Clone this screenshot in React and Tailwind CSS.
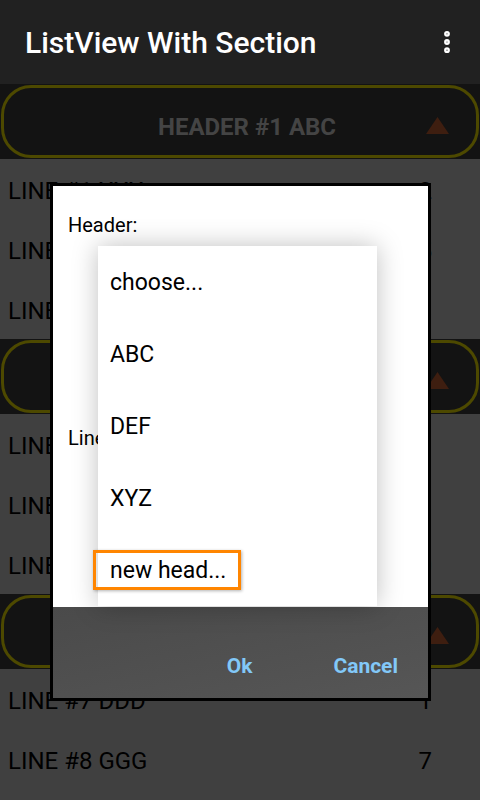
import { EllipsisVertical } from 'lucide-react'

const sections = [
  { title: 'HEADER #1 ABC', lines: [['LINE #1 XXX', 2], ['LINE #2 YYY', 5], ['LINE #3 ZZZ', 3]] },
  { title: 'HEADER #2 DEF', lines: [['LINE #4 AAA', 1], ['LINE #5 BBB', 3], ['LINE #6 CCC', 0]] },
  { title: 'HEADER #3 XYZ', lines: [['LINE #7 DDD', 1], ['LINE #8 GGG', 7]] },
]

const options = ['choose...', 'ABC', 'DEF', 'XYZ', 'new head...']

function SectionHeader({ title }) {
  return (
    <div className="h-[75px] bg-[#131313] p-[1px] flex">
      <div className="flex-1 flex items-center rounded-[30px] border-[3px] border-[#4d4900]">
        <span className="flex-1 text-center pl-[64px] pt-[10px] text-[24px] font-bold text-[#444444]">{title}</span>
        <svg width="23" height="17" viewBox="0 0 23 17" className="mr-[27px] mt-[8px]">
          <polygon points="11.5,0 23,17 0,17" fill="#3e1e10" />
        </svg>
      </div>
    </div>
  )
}

function LineRow({ name, count }) {
  return (
    <div className="h-[60px] flex items-center justify-between pl-[8px] pr-[48px] pt-[4px] text-[24px] text-black">
      <span>{name}</span>
      <span>{count}</span>
    </div>
  )
}

export default function App() {
  return (
    <div className="relative w-[480px] h-[800px] overflow-hidden bg-[#404040] font-['Roboto',sans-serif]">
      <div className="h-[84px] bg-[#212121] flex items-center justify-between pl-[25px] pr-[19px]">
        <h1 className="text-[30px] font-medium text-white">ListView With Section</h1>
        <EllipsisVertical size={28} strokeWidth={3} className="text-white" />
      </div>

      {sections.map((s) => (
        <div key={s.title}>
          <SectionHeader title={s.title} />
          {s.lines.map(([n, c]) => (
            <LineRow key={n} name={n} count={c} />
          ))}
        </div>
      ))}

      {/* dialog */}
      <div className="absolute left-[50px] top-[183px] w-[381px] h-[518px] border-[3px] border-black flex flex-col">
        <div className="relative flex-1 bg-white pl-[15px]">
          <div className="pt-[24px] text-[20px] text-black">Header:</div>
          <div className="pt-[183px] text-[20px] text-black">Line:</div>

          {/* spinner popup */}
          <div className="absolute left-[45px] top-[60px] w-[279px] h-[360px] bg-white shadow-[0_0_24px_rgba(0,0,0,0.25)]">
            {options.map((o, i) => (
              <div key={o} className="relative h-[72px] flex items-center pl-[12px] pt-[3px] text-[23px] text-black">
                {i === options.length - 1 && (
                  <div className="absolute left-[-5px] top-[16px] w-[148px] h-[40px] border-[3px] border-[#ff8500] shadow-[1px_1px_3px_rgba(0,0,0,0.3)]" />
                )}
                <span className="relative">{o}</span>
              </div>
            ))}
          </div>
        </div>
        <div className="h-[91px] bg-gradient-to-br from-[#4a4a4a] to-[#565656] flex justify-end items-start pt-[44px] pr-[30px] gap-[81px] text-[21px] font-bold text-[#82c8f8]">
          <span>Ok</span>
          <span>Cancel</span>
        </div>
      </div>
    </div>
  )
}
